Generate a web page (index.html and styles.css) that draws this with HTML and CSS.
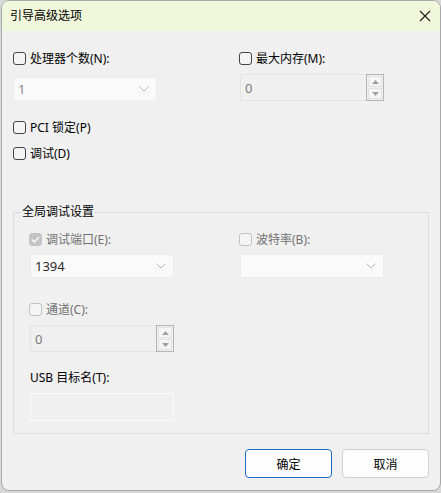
FILE: index.html
```html
<!DOCTYPE html>
<html lang="zh-CN">
<head>
<meta charset="utf-8">
<title>引导高级选项</title>
<link rel="stylesheet" href="styles.css">
</head>
<body>
<div class="window">
  <div class="titlebar">
    <span class="title">引导高级选项</span>
    <svg class="close" width="12" height="12" viewBox="0 0 12 12"><path d="M1 1L11 11M11 1L1 11" stroke="#1a1a1a" stroke-width="1.1" fill="none"/></svg>
  </div>
  <div class="content">
    <div class="top-grid">
      <div class="col">
        <div class="check"><span class="box"></span><span class="lbl">处理器个数(N):</span></div>
        <div class="combo combo-top"><span class="val dim">1</span><svg class="chev" width="10" height="6" viewBox="0 0 10 6"><path d="M0.5 0.5L5 5L9.5 0.5" stroke="#b8b8b8" fill="none"/></svg></div>
      </div>
      <div class="col">
        <div class="check"><span class="box"></span><span class="lbl">最大内存(M):</span></div>
        <div class="spin spin-top">
          <div class="spin-field"><span class="val dim">0</span></div>
          <div class="spin-btns">
            <div class="sbtn"><svg width="7" height="4" viewBox="0 0 7 4"><path d="M0 4L3.5 0L7 4Z" fill="#a0a0a0"/></svg></div>
            <div class="sbtn"><svg width="7" height="4" viewBox="0 0 7 4"><path d="M0 0L3.5 4L7 0Z" fill="#a0a0a0"/></svg></div>
          </div>
        </div>
      </div>
    </div>
    <div class="check pci"><span class="box"></span><span class="lbl">PCI 锁定(P)</span></div>
    <div class="check dbg"><span class="box"></span><span class="lbl">调试(D)</span></div>

    <div class="group">
      <div class="legend">全局调试设置</div>
      <div class="group-grid">
        <div class="col">
          <div class="check disabled"><span class="box checked"><svg width="9" height="7" viewBox="0 0 9 7"><path d="M1 3.5L3.4 6L8 1" stroke="#fff" stroke-width="1.2" fill="none"/></svg></span><span class="lbl">调试端口(E):</span></div>
          <div class="combo combo-g"><span class="val">1394</span><svg class="chev" width="10" height="6" viewBox="0 0 10 6"><path d="M0.5 0.5L5 5L9.5 0.5" stroke="#b8b8b8" fill="none"/></svg></div>
        </div>
        <div class="col">
          <div class="check disabled"><span class="box"></span><span class="lbl">波特率(B):</span></div>
          <div class="combo combo-g"><span class="val"></span><svg class="chev" width="10" height="6" viewBox="0 0 10 6"><path d="M0.5 0.5L5 5L9.5 0.5" stroke="#b8b8b8" fill="none"/></svg></div>
        </div>
      </div>
      <div class="check disabled chan"><span class="box"></span><span class="lbl">通道(C):</span></div>
      <div class="spin spin-g">
        <div class="spin-field"><span class="val dim">0</span></div>
        <div class="spin-btns">
          <div class="sbtn"><svg width="7" height="4" viewBox="0 0 7 4"><path d="M0 4L3.5 0L7 4Z" fill="#a0a0a0"/></svg></div>
          <div class="sbtn"><svg width="7" height="4" viewBox="0 0 7 4"><path d="M0 0L3.5 4L7 0Z" fill="#a0a0a0"/></svg></div>
        </div>
      </div>
      <div class="usb-lbl">USB 目标名(T):</div>
      <div class="textfield"></div>
    </div>

    <div class="buttons">
      <button class="btn primary">确定</button>
      <button class="btn">取消</button>
    </div>
  </div>
</div>
</body>
</html>
```
FILE: styles.css
```css
html, body {
  margin: 0;
  padding: 0;
}
body {
  width: 441px;
  height: 493px;
  background: #d8d8d8;
  font-family: "Noto Sans", "Noto Sans CJK SC", sans-serif;
  font-size: 12px;
  color: #000;
  overflow: hidden;
}
.window {
  box-sizing: border-box;
  width: 440px;
  height: 491px;
  margin-left: 1px;
  border: 1px solid #a9a9a9;
  border-radius: 8px;
  background: #f0f0f0;
  overflow: hidden;
}
.titlebar {
  height: 30px;
  background: #f0f7da;
  display: flex;
  align-items: center;
  justify-content: space-between;
  padding: 0 9px 0 8px;
}
.title {
  font-size: 12px;
  line-height: 16px;
  color: #000;
}
.close {
  display: block;
}
.content {
  padding: 21px 11px 0 11px;
}
.top-grid {
  display: grid;
  grid-template-columns: 226px 1fr;
}
.group-grid {
  display: grid;
  grid-template-columns: 210px 1fr;
}
.col {
  display: flex;
  flex-direction: column;
  align-items: flex-start;
}
.check {
  display: flex;
  align-items: center;
  height: 13px;
  gap: 4px;
  white-space: nowrap;
}
.lbl {
  line-height: 13px;
}
.box {
  box-sizing: border-box;
  width: 13px;
  height: 13px;
  border: 1px solid #454545;
  border-radius: 3px;
  background: #f4f4f4;
  flex: none;
  display: flex;
  align-items: center;
  justify-content: center;
}
.check.disabled .box {
  border-color: #c2c2c2;
  background: #f5f5f5;
}
.check.disabled .box.checked {
  background: #c4c4c4;
  border-color: #c4c4c4;
}
.check.disabled .lbl {
  color: #707070;
}
.val {
  color: #2b2b2b;
}
.val.dim {
  color: #7a7a7a;
}
.combo {
  box-sizing: border-box;
  width: 144px;
  height: 24px;
  background: #fafafa;
  border: 1px solid #ececec;
  border-radius: 2px;
  display: flex;
  align-items: center;
  justify-content: space-between;
  padding: 0 7px 0 4px;
  line-height: 14px;
}
.combo .val {
  font-size: 13px;
}
.combo .val.dim {
  color: #888;
}
.chev {
  display: block;
}
.combo-top {
  margin-top: 12px;
}
.combo-g {
  margin-top: 8px;
  margin-left: 1px;
}
.spin {
  box-sizing: border-box;
  width: 144px;
  height: 27px;
  display: flex;
}
.spin-field {
  flex: 1;
  box-sizing: border-box;
  border: 1px solid #e4e4e4;
  border-right: none;
  background: #f0f0f0;
  display: flex;
  align-items: center;
  padding-left: 4px;
  font-size: 13px;
}
.spin-btns {
  box-sizing: border-box;
  width: 18px;
  border: 1px solid #b5b5b5;
  background: #f0f0f0;
  display: flex;
  flex-direction: column;
  padding: 1px;
  gap: 1px;
}
.sbtn {
  flex: 1;
  background: #f5f5f5;
  border: 1px solid #e2e2e2;
  display: flex;
  align-items: center;
  justify-content: center;
}
.sbtn svg {
  display: block;
}
.spin-top {
  margin-top: 9px;
  margin-left: 1px;
}
.pci {
  margin-top: 20px;
}
.dbg {
  margin-top: 13px;
}
.group {
  box-sizing: border-box;
  margin-top: 52px;
  width: 416px;
  height: 222px;
  border: 1px solid #dcdcdc;
  padding: 0 0 0 15px;
}
.legend {
  height: 16px;
  line-height: 16px;
  margin: -9px 0 0 -8px;
  padding: 0 1px;
  background: #f0f0f0;
  width: max-content;
  color: #000;
}
.group-grid {
  margin-top: 13px;
}
.chan {
  margin-top: 25px;
}
.spin-g {
  margin-top: 9px;
  margin-left: 1px;
}
.usb-lbl {
  margin-top: 19px;
  margin-left: 1px;
  line-height: 14px;
  height: 14px;
  color: #000;
}
.textfield {
  box-sizing: border-box;
  margin-top: 8px;
  margin-left: 1px;
  width: 144px;
  height: 28px;
  border: 1px solid #fbfbfb;
  background: #f0f0f0;
}
.buttons {
  display: flex;
  justify-content: flex-end;
  gap: 10px;
  margin-top: 15px;
  padding-right: 0;
  width: 416px;
}
.btn {
  box-sizing: border-box;
  width: 87px;
  height: 29px;
  border: 1px solid #d0d0d0;
  border-radius: 4px;
  background: #fdfdfd;
  font-family: "Noto Sans", "Noto Sans CJK SC", sans-serif;
  font-size: 12px;
  color: #000;
  padding: 0;
  display: flex;
  align-items: center;
  justify-content: center;
}
.btn.primary {
  border-color: #1a6fc4;
}
```
